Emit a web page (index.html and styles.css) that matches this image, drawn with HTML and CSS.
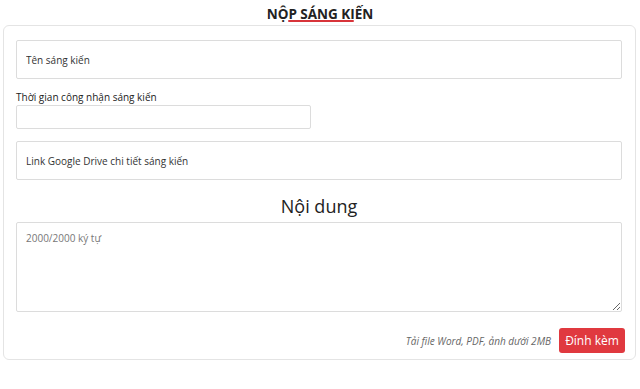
FILE: index.html
```html
<!DOCTYPE html>
<html lang="vi">
<head>
    <meta charset="UTF-8">
    <meta name="viewport" content="width=device-width, initial-scale=1.0">
    <title>Nộp sáng kiến</title>
    <link rel="stylesheet" href="styles.css">
</head>
<body>
    <h1 class="page-title">NỘP SÁNG KIẾN</h1>
    <form class="card">
        <input type="text" class="field field-tall" placeholder="Tên sáng kiến">
        <div class="form-group">
            <label for="recognized">Thời gian công nhận sáng kiến</label>
            <input type="text" id="recognized" class="field field-short">
        </div>
        <input type="text" class="field field-tall" placeholder="Link Google Drive chi tiết sáng kiến">
        <h2 class="section-title">Nội dung</h2>
        <textarea class="field content" placeholder="2000/2000 ký tự"></textarea>
        <div class="actions">
            <span class="hint">Tải file Word, PDF, ảnh dưới 2MB</span>
            <button type="button" class="btn-attach">Đính kèm</button>
        </div>
    </form>
</body>
</html>
```

FILE: styles.css
```css
body {
    font-family: "Open Sans", Arial, sans-serif;
    margin: 0;
    color: #222;
    background: #fff;
}
.page-title {
    font-size: 13.5px;
    font-weight: 700;
    text-align: center;
    margin: 0;
    padding-top: 4px;
    height: 21px;
    line-height: 20px;
    position: relative;
}
.page-title::after {
    content: "";
    position: absolute;
    left: 50%;
    top: 20px;
    width: 66px;
    margin-left: -32px;
    height: 2px;
    background: #d8343a;
    border-radius: 1px;
}
.card {
    margin: 0 4px 0 3px;
    border: 1px solid #e4e4e4;
    border-radius: 6px;
    padding: 14px 13px 6px 12px;
    display: flex;
    flex-direction: column;
}
.field {
    font-family: inherit;
    font-size: 10px;
    color: #333;
    border: 1px solid #dcdcdc;
    border-radius: 2px;
    padding: 0 9px;
    box-sizing: border-box;
    background: #fff;
    outline: none;
}
.field::placeholder {
    color: #333;
}
.field-tall {
    width: 100%;
    height: 39px;
}
.form-group {
    margin-top: 11px;
    margin-bottom: 12px;
}
label {
    display: block;
    font-size: 10px;
    line-height: 14px;
    color: #222;
}
.field-short {
    width: 295px;
    height: 24px;
    margin-top: 1px;
    display: block;
}
.section-title {
    font-size: 18px;
    font-weight: 400;
    text-align: center;
    margin: 11px 0 0;
    line-height: 30px;
    color: #222;
}
.content {
    height: 90px;
    padding: 8px 9px;
    resize: vertical;
    margin-top: 1px;
}
.content::placeholder {
    color: #777;
}
.actions {
    display: flex;
    justify-content: flex-end;
    align-items: center;
    gap: 8px;
    margin-top: 16px;
    margin-right: -3px;
}
.hint {
    font-size: 10px;
    font-style: italic;
    color: #666;
}
.btn-attach {
    font-family: inherit;
    font-size: 12px;
    color: #fff;
    background: #e0393f;
    border: none;
    border-radius: 3px;
    width: 66px;
    height: 25px;
    padding: 0;
    cursor: pointer;
}
```
